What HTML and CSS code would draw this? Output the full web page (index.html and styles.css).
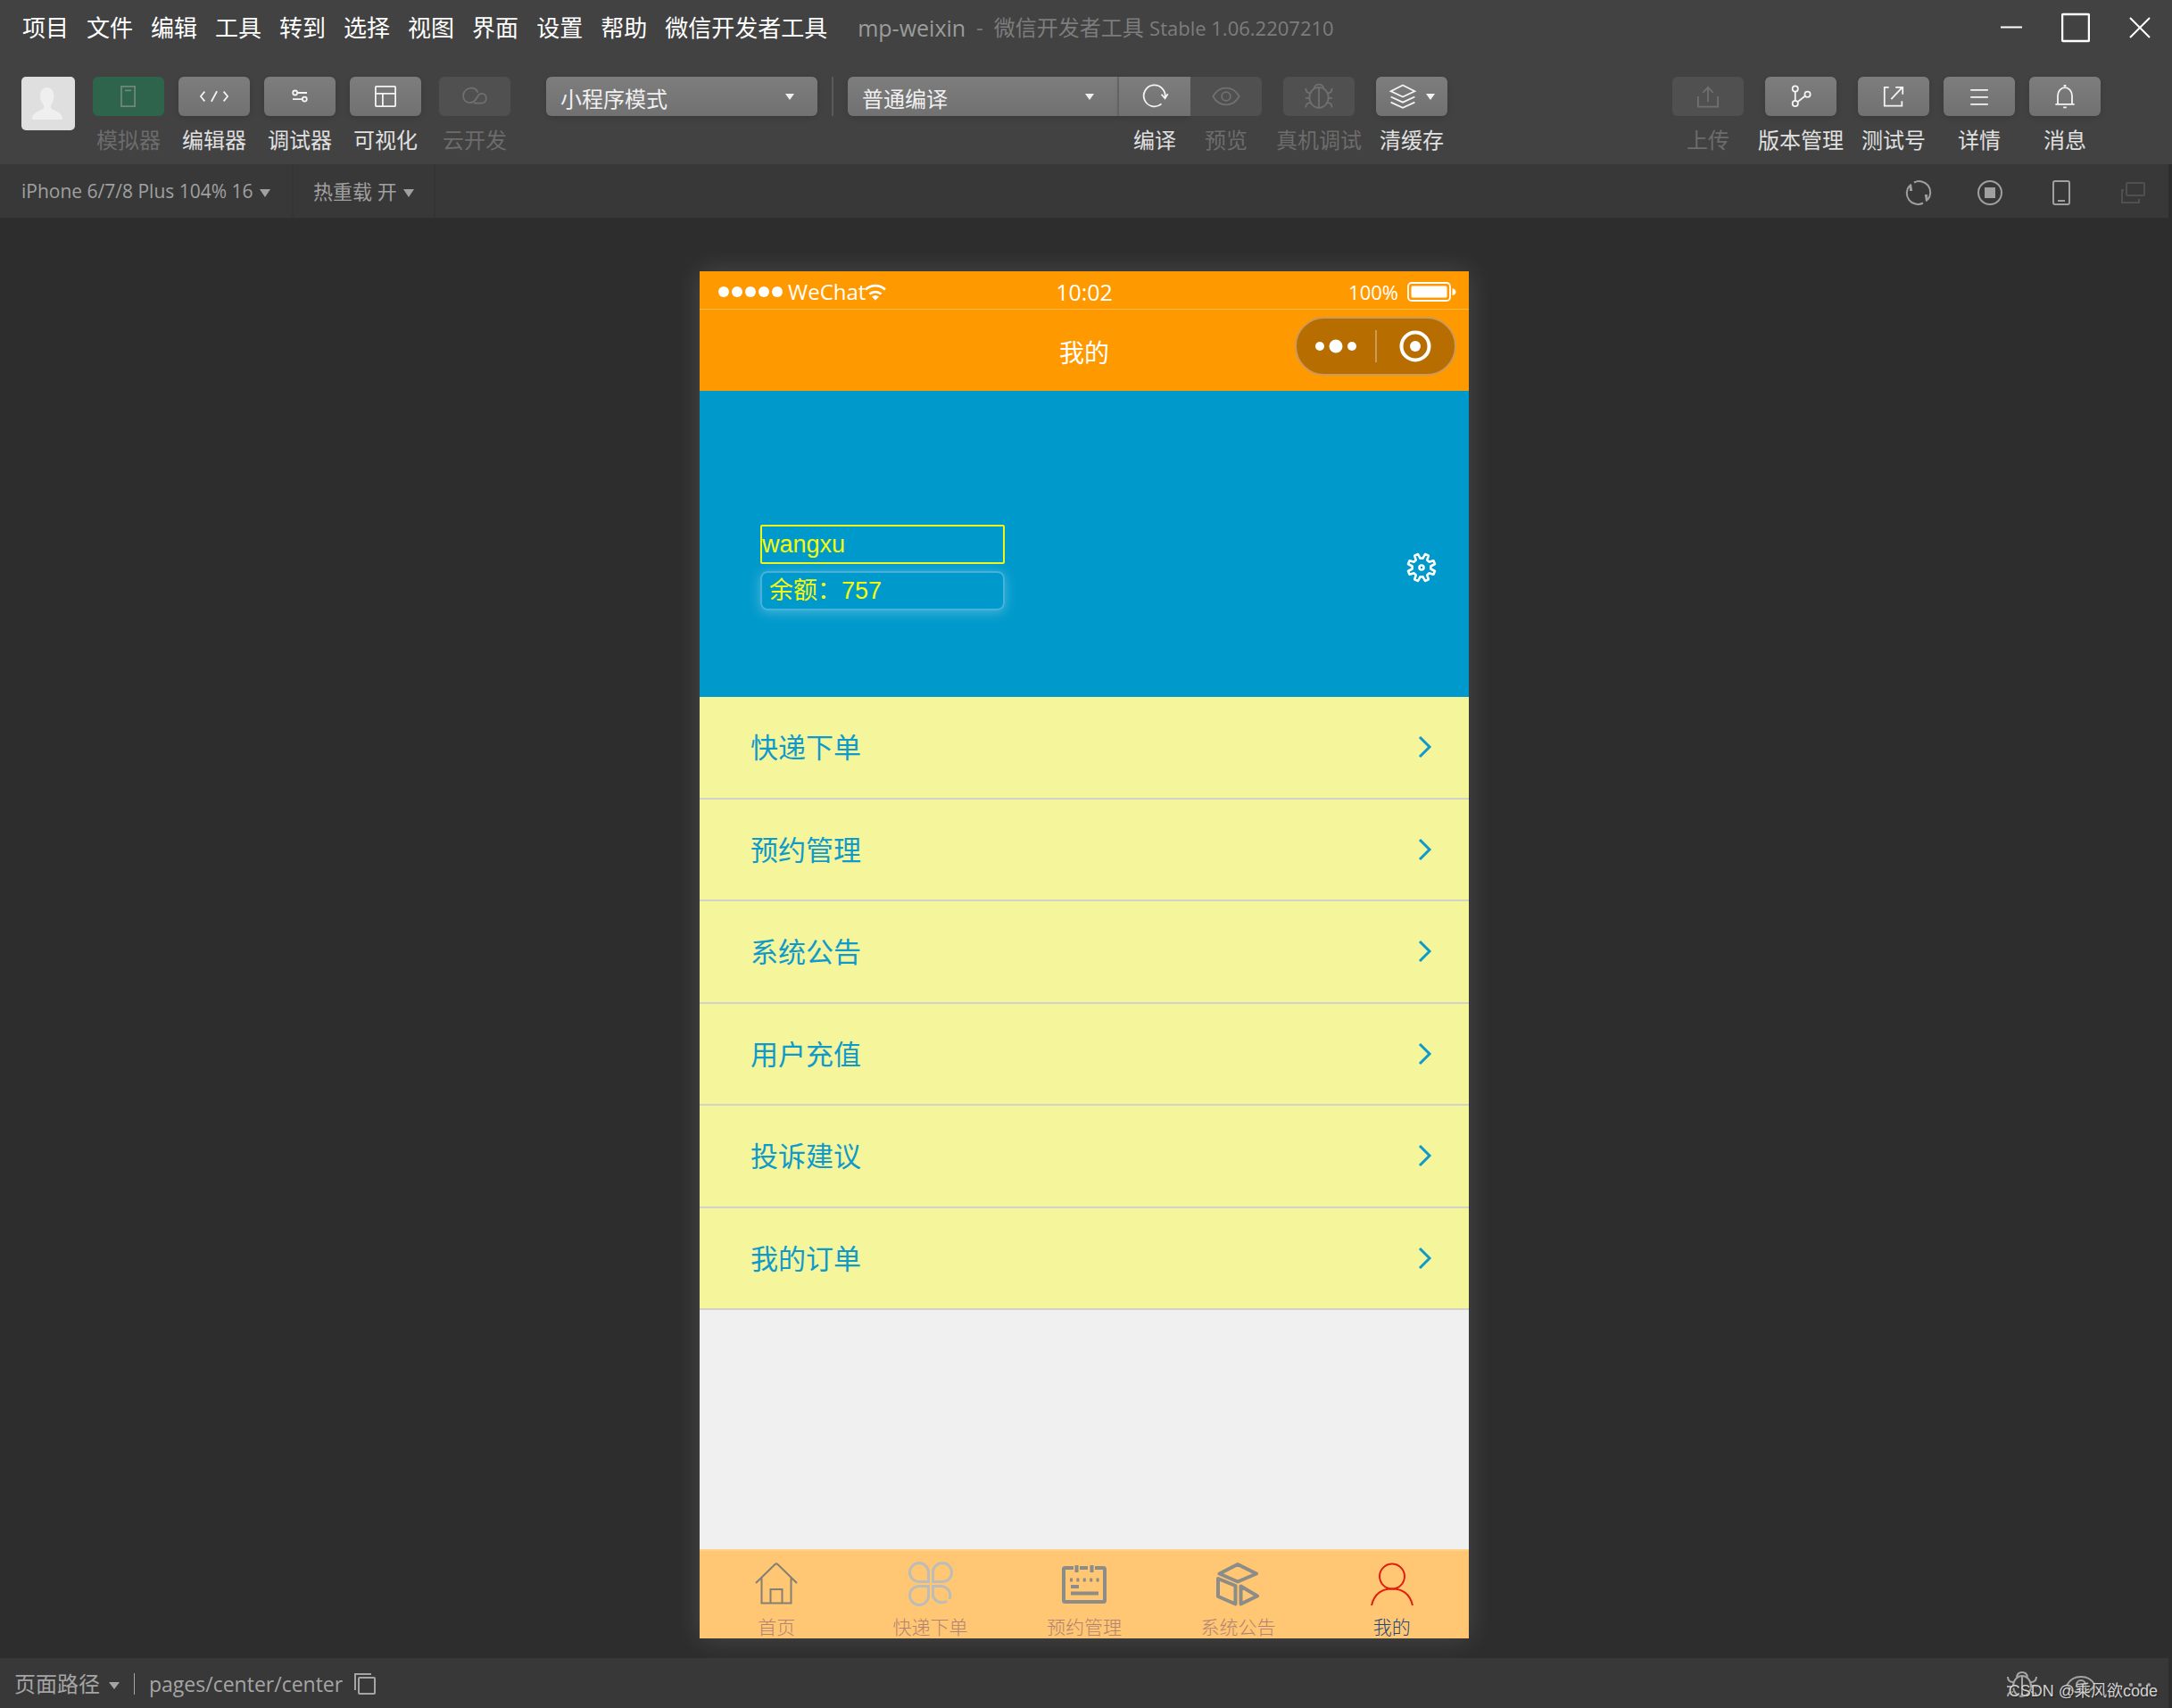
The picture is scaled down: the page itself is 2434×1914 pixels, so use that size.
FILE: index.html
```html
<!DOCTYPE html>
<html lang="zh-CN">
<head>
<meta charset="utf-8">
<title>mp-weixin - 微信开发者工具</title>
<link rel="stylesheet" href="styles.css">
</head>
<body>
<header class="top">
  <div class="titlebar">
    <nav class="menu">
      <a href="#">项目</a><a href="#">文件</a><a href="#">编辑</a><a href="#">工具</a><a href="#">转到</a><a href="#">选择</a><a href="#">视图</a><a href="#">界面</a><a href="#">设置</a><a href="#">帮助</a><a href="#">微信开发者工具</a>
    </nav>
    <div class="doc-title"><span class="doc-name">mp-weixin</span><span>-</span><span>微信开发者工具 <span class="version">Stable 1.06.2207210</span></span></div>
    <div class="window-buttons">
      <button type="button" aria-label="最小化"><svg width="32" height="36" viewBox="0 0 32 36"><path d="M4 17.500h24" stroke-width="2"/></svg></button>
      <button type="button" aria-label="最大化"><svg width="32" height="36" viewBox="0 0 32 36"><rect x="1" y="3" width="30" height="30" rx="1" stroke-width="2.500"/></svg></button>
      <button type="button" aria-label="关闭"><svg width="32" height="36" viewBox="0 0 32 36"><path d="M5 7l22 22M27 7L5 29" stroke-width="2"/></svg></button>
    </div>
  </div>

  <div class="toolbar">
    <button type="button" class="avatar" aria-label="用户"><svg width="60" height="60" viewBox="0 0 60 60"><path d="M28.500 12c5 0 8 4 8 9.500 0 5-2 8-3.500 10.500v3c2 3 12 4 13 11 .3 1.500-.5 2-2 2H14c-1.500 0-2.300-.5-2-2 1-7 11-8 13-11v-3c-1.500-2.500-4-5.500-4-10.500 0-5.500 3-9.500 7.500-9.500z"/></svg></button>
    <div class="tools">
      <button type="button" class="tool off active"><span class="face"><svg width="36" height="36" viewBox="0 0 36 36"><path d="M9 5.500h17v25H9zM13.500 10.500h8"/></svg></span><span>模拟器</span></button>
      <button type="button" class="tool"><span class="face"><svg width="36" height="36" viewBox="0 0 36 36"><path d="M6 12L1 18l5 6M30 12l5 6-5 6M21.500 11.500l-7 13"/></svg></span><span>编辑器</span></button>
      <button type="button" class="tool"><span class="face"><svg width="36" height="36" viewBox="0 0 36 36"><circle cx="12" cy="13.500" r="2.800"/><circle cx="24" cy="21.500" r="2.800"/><path d="M15 13.500h12M9 21.500h12"/></svg></span><span>调试器</span></button>
      <button type="button" class="tool"><span class="face"><svg width="36" height="36" viewBox="0 0 36 36"><rect x="5.500" y="5.500" width="25" height="25" rx="1"/><path d="M6 14.500h24M14.500 14.500V30"/></svg></span><span>可视化</span></button>
    </div>
    <button type="button" class="tool off cloud"><span class="face"><svg width="36" height="36" viewBox="0 0 36 36"><path d="M22 13.500C21 10 18 7.500 13.500 7.500 8.500 7.500 3.500 11.500 3.500 17s3.500 9 8.500 9c9.500 0 8-11.500 14.500-11.500 3.500 0 6 2.500 6 6s-2.500 6-6 6H17"/></svg></span><span>云开发</span></button>
    <div class="picker mode"><select aria-label="模式"><option>小程序模式</option></select></div>
    <span class="split"></span>
    <div class="compile">
      <div class="picker"><select aria-label="编译模式"><option>普通编译</option></select></div>
      <button type="button" class="tool join"><span class="face"><svg width="36" height="36" viewBox="0 0 36 36"><path d="M26.500 27.500A13.500 13.500 0 1 1 31 19.500M26.500 15.500l4.500 5 3.500-5.500"/></svg></span><span>编译</span></button>
      <button type="button" class="tool off last"><span class="face"><svg width="36" height="36" viewBox="0 0 36 36"><path d="M1.500 18C5 11.500 11 7.500 18 7.500s13 4 16.500 10.500C31 24.500 25 28.500 18 28.500S5 24.500 1.500 18z"/><circle cx="18" cy="18" r="5.500"/></svg></span><span>预览</span></button>
    </div>
    <div class="tools">
      <button type="button" class="tool off"><span class="face"><svg width="36" height="36" viewBox="0 0 36 36"><ellipse cx="18" cy="19.500" rx="12" ry="13"/><path d="M12 8.500C12 1 24 1 24 8.500M18 7v26M1.500 8c0 4.500 2.500 6 5.500 6M34.500 8c0 4.500-2.500 6-5.500 6M1 20h5M30 20h5M1.500 32c0-4.500 2.500-6 6-6M34.500 32c0-4.500-2.500-6-6-6"/></svg></span><span>真机调试</span></button>
      <button type="button" class="tool"><span class="face drop"><svg width="36" height="36" viewBox="0 0 36 36"><path d="M18 4l15 7.500-15 7-15-7zM3 18.500l15 7 15-7M3 25.500l15 7 15-7"/></svg></span><span>清缓存</span></button>
    </div>
    <div class="tools right">
      <button type="button" class="tool off"><span class="face"><svg width="36" height="36" viewBox="0 0 36 36"><path d="M5.500 18v13h25V18M18 25V7M11.500 13.500L18 6.500l6.500 7"/></svg></span><span>上传</span></button>
      <button type="button" class="tool"><span class="face"><svg width="36" height="36" viewBox="0 0 36 36"><circle cx="11" cy="8.500" r="3.500"/><circle cx="11" cy="27" r="3.500"/><circle cx="26.500" cy="15.500" r="3.500"/><path d="M11 12v11.500M14 25l9.500-7.500"/></svg></span><span>版本管理</span></button>
      <button type="button" class="tool"><span class="face"><svg width="36" height="36" viewBox="0 0 36 36"><path d="M12 6.500H6.500v23.500H28.500V24M15 21.500L29 6.500M20.500 6.500H29.500v9"/></svg></span><span>测试号</span></button>
      <button type="button" class="tool"><span class="face"><svg width="36" height="36" viewBox="0 0 36 36"><path d="M7 10h22M7 19h22M7 28h22"/></svg></span><span>详情</span></button>
      <button type="button" class="tool"><span class="face"><svg width="36" height="36" viewBox="0 0 36 36"><path d="M6 28h24M9 28V17c0-5.500 4-10 9-10s9 4.500 9 10v11M16.500 4.500h3M16 32h4"/></svg></span><span>消息</span></button>
    </div>
  </div>
</header>

<div class="workspace">
  <div class="simbar">
    <div class="simpick device"><select aria-label="设备"><option>iPhone 6/7/8 Plus 104% 16</option></select></div>
    <div class="simpick"><select aria-label="热重载"><option>热重载 开</option></select></div>
    <div class="simtools">
      <button type="button" aria-label="刷新"><svg width="32" height="32" viewBox="0 0 32 32"><path d="M11 4.500A12.500 12.500 0 0 1 26 24M21 27.500A12.500 12.500 0 0 1 6 8"/><path d="M7 6.500v6.500h1zM25 25.500v-6.500h-1z"/></svg></button>
      <button type="button" aria-label="停止"><svg width="32" height="32" viewBox="0 0 32 32"><circle cx="16" cy="16" r="13"/><rect x="11" y="11" width="10" height="10" fill="currentColor"/></svg></button>
      <button type="button" aria-label="设备方向"><svg width="32" height="32" viewBox="0 0 32 32"><rect x="7" y="3" width="18" height="26" rx="2"/><path d="M12 25h8"/></svg></button>
      <button type="button" class="dim" aria-label="独立窗口"><svg width="32" height="32" viewBox="0 0 32 32"><rect x="9" y="5" width="20" height="14" rx="1"/><path d="M6 13H4v14h19v-4"/></svg></button>
    </div>
  </div>

  <main class="stage">
    <section class="phone">
      <div class="status">
        <div class="carrier"><i></i><i></i><i></i><i></i><i></i><span>WeChat</span><svg width="24" height="19" viewBox="0 0 24 19"><path d="M1 6.500a16 16 0 0 1 22 0M5.500 11.500a10 10 0 0 1 13 0" stroke-width="2.800"/><path d="M8 14.500q4-3 8 0l-4 4z" fill="currentColor" stroke="none"/></svg></div>
        <time>10:02</time>
        <div class="power"><span>100%</span><svg width="55" height="22" viewBox="0 0 55 22"><rect x="1" y="1" width="47" height="20" rx="4" stroke-width="1.800"/><rect x="4.500" y="4.500" width="40" height="13" rx="1.500" fill="currentColor" stroke="none"/><path d="M50.500 7q4 1 4 4t-4 4z" fill="currentColor" stroke="none"/></svg></div>
      </div>
      <div class="navbar">
        <h1>我的</h1>
        <div class="capsule">
          <button type="button" aria-label="更多"><svg width="48" height="36" viewBox="0 0 48 36"><g fill="currentColor" stroke="none"><circle cx="6" cy="18" r="5"/><circle cx="24" cy="18" r="7.500"/><circle cx="42" cy="18" r="5"/></g></svg></button>
          <button type="button" aria-label="关闭"><svg width="36" height="36" viewBox="0 0 36 36"><circle cx="18" cy="18" r="15.500" stroke-width="4"/><circle cx="18" cy="18" r="6" fill="currentColor" stroke="none"/></svg></button>
        </div>
      </div>

      <div class="profile">
        <div class="account">
          <div class="user-name">wangxu</div>
          <div class="balance">余额：757</div>
        </div>
        <button type="button" class="gear" aria-label="设置"><svg width="36" height="36" viewBox="0 0 36 36"><path d="M16.500 7.600h3L22 3l3.800 1.600-1.500 5 2.100 2.100 5-1.500L33 14l-4.600 2.500v3L33 22l-1.600 3.800-5-1.500-2.100 2.100 1.500 5L22 33l-2.500-4.600h-3L14 33l-3.800-1.600 1.500-5-2.100-2.100-5 1.500L3 22l4.600-2.500v-3L3 14l1.600-3.800 5 1.500 2.100-2.100-1.500-5L14 3z" stroke-width="2.600" stroke-linejoin="round"/><circle cx="18" cy="18" r="2.500" stroke-width="2.600"/></svg></button>
      </div>

      <nav class="list">
        <a href="#">快递下单<svg width="16" height="28" viewBox="0 0 16 28"><path d="M2 3l11 11L2 25"/></svg></a>
        <a href="#">预约管理<svg width="16" height="28" viewBox="0 0 16 28"><path d="M2 3l11 11L2 25"/></svg></a>
        <a href="#">系统公告<svg width="16" height="28" viewBox="0 0 16 28"><path d="M2 3l11 11L2 25"/></svg></a>
        <a href="#">用户充值<svg width="16" height="28" viewBox="0 0 16 28"><path d="M2 3l11 11L2 25"/></svg></a>
        <a href="#">投诉建议<svg width="16" height="28" viewBox="0 0 16 28"><path d="M2 3l11 11L2 25"/></svg></a>
        <a href="#">我的订单<svg width="16" height="28" viewBox="0 0 16 28"><path d="M2 3l11 11L2 25"/></svg></a>
      </nav>

      <nav class="tabs">
        <a href="#"><svg class="icon-home" width="50" height="50" viewBox="0 0 50 50"><path d="M2 24L23.500 3q1.500-1.200 3 0L48 24M8.500 18.500V46.500h33V18.500M18.500 46V31h13v15"/></svg><span>首页</span></a>
        <a href="#"><svg class="icon-clover" width="50" height="50" viewBox="0 0 50 50"><path d="M22.500 22.500H13A10.500 10.500 0 1 1 22.500 12zM27.500 22.500V12A10.500 10.500 0 1 1 37 22.500zM22.500 27.500V38A10.500 10.500 0 1 1 13 27.500zM43.500 44A10.500 10.500 0 0 1 27.500 38V27.500H37A10.500 10.500 0 0 1 46 42"/></svg><span>快递下单</span></a>
        <a href="#"><svg class="icon-solid" width="50" height="50" viewBox="0 0 50 50"><path d="M13 7H3.500q-1.500 0-1.500 1.500v35q0 1.500 1.500 1.500h43q1.500 0 1.500-1.500v-35q0-1.500-1.500-1.500H37M20 7h9M16.500 4v8M33.500 4v8M10 28h9M10 35.500h31"/><path d="M9 20.500h33" stroke-dasharray="3 4.400"/></svg><span>预约管理</span></a>
        <a href="#"><svg class="icon-solid" width="50" height="50" viewBox="0 0 50 50"><path d="M25 3l21 10.500L25 22.500 4.500 13.500zM3 19l19.500 8v20.500L3 39zM28.500 27.500v20l18.500-9z"/></svg><span>系统公告</span></a>
        <a href="#" class="current"><svg class="icon-person" width="50" height="50" viewBox="0 0 50 50"><circle cx="25" cy="16.500" r="14"/><path d="M2 49C5 36 14 30.500 25 30.500S45 36 48 49"/></svg><span>我的</span></a>
      </nav>
    </section>
  </main>

  <footer class="footer">
    <div class="pathpick"><select aria-label="页面路径"><option>页面路径</option></select></div>
    <span class="bar"></span>
    <span class="path">pages/center/center</span>
    <button type="button" aria-label="复制路径"><svg width="26" height="26" viewBox="0 0 26 26"><rect x="6" y="6" width="18" height="18" rx="1"/><path d="M2 20V2h18"/></svg></button>
    <div class="footer-tools">
      <button type="button" aria-label="调试"><svg width="36" height="32" viewBox="0 0 36 32"><ellipse cx="18" cy="17.500" rx="10" ry="11.500"/><path d="M12 7.500C13 0 23 0 24 7.500M18 7v22M2 7c0 5 3 6 6 6M34 7c0 5-3 6-6 6M1 18h7M28 18h7M2 29c0-4 3-5 6-5M34 29c0-4-3-5-6-5"/></svg></button>
      <button type="button" aria-label="预览"><svg width="36" height="32" viewBox="0 0 36 32"><path d="M2.500 16C6 9.500 11.500 7 18 7s12 2.500 15.500 9C30 22.500 24.500 25 18 25S6 22.500 2.500 16z"/><circle cx="18" cy="16" r="5"/></svg></button>
      <button type="button" aria-label="更多"><svg width="36" height="32" viewBox="0 0 36 32"><g fill="currentColor" stroke="none"><circle cx="8" cy="16" r="2"/><circle cx="18" cy="16" r="2"/><circle cx="28" cy="16" r="2"/></g></svg></button>
    </div>
  </footer>
</div>
<div class="watermark">CSDN @乘风欲code</div>
</body>
</html>
```
FILE: styles.css
```css
* { box-sizing: border-box; }

body {
  margin: 0;
  min-height: 100vh;
  display: flex;
  flex-direction: column;
  position: relative;
  background: #2d2d2d;
  color: #e0e0e0;
  font-family: "Open Sans", "Noto Sans CJK SC", sans-serif;
  font-size: 24px;
  line-height: 32px;
}

a { color: inherit; text-decoration: none; }

button, select {
  margin: 0;
  padding: 0;
  border: 0;
  background: none;
  color: inherit;
  font: inherit;
  appearance: none;
}

button { display: flex; }
svg { display: block; fill: none; stroke: currentColor; stroke-width: 2; flex: none; }

/* title bar */
.top { background: #424242; }

.titlebar {
  display: flex;
  align-items: center;
  height: 62px;
  padding: 0 20px 0 25px;
}

.menu { display: flex; gap: 20px; color: #fff; font-size: 26px; white-space: nowrap; }

.doc-title {
  display: flex;
  gap: 12px;
  margin-left: 34px;
  color: #7d7d7d;
  white-space: nowrap;
}
.doc-name { color: #9c9c9c; font-size: 25px; }
.version { font-size: 22px; }

.window-buttons { display: flex; gap: 40px; margin-left: auto; color: #fff; }

/* toolbar */
.toolbar {
  display: flex;
  align-items: flex-start;
  height: 122px;
  padding: 24px 80px 0 24px;
  white-space: nowrap;
}

.avatar { width: 60px; height: 60px; margin-right: 20px; border-radius: 5px; background: #dfdfdf; }
.avatar svg { fill: #efefef; stroke: none; }

.tools { display: flex; gap: 16px; }
.tools + .tool { margin-left: 20px; }
.right { margin-left: auto; }

.tool { flex-direction: column; align-items: center; gap: 12px; line-height: 30px; }

.face {
  display: flex;
  align-items: center;
  justify-content: center;
  width: 80px;
  height: 44px;
  border-radius: 6px;
  background: linear-gradient(#7d7d7d, #717171);
  box-shadow: 0 2px 6px rgba(0, 0, 0, .12);
  color: #f4f4f4;
}
.face svg { width: 32px; height: 32px; }
.off { color: #6c6c6c; }
.off .face { background: #505050; color: #707070; box-shadow: none; }
.active .face { background: #2d644b; color: #70877c; }

.picker::after, .simpick::after, .pathpick::after, .drop::after {
  content: "";
  border: 5px solid transparent;
  border-top: 7px solid currentColor;
  border-bottom: 0;
  pointer-events: none;
}
.drop { gap: 10px; }

.picker {
  display: flex;
  align-items: center;
  width: 304px;
  height: 44px;
  padding-right: 26px;
  border-radius: 6px;
  background: linear-gradient(#7d7d7d, #717171);
  box-shadow: 0 2px 6px rgba(0, 0, 0, .12);
  color: #f0f0f0;
}
.picker select { flex: 1; height: 44px; padding: 6px 0 0 16px; }
.mode { margin-left: 40px; }
.split { width: 2px; height: 44px; margin: 0 16px; background: #5a5a5a; }
.compile { display: flex; margin-right: 16px; }
.compile .picker { border-right: 2px solid #686868; border-radius: 6px 0 0 6px; }
.join .face { border-radius: 0; }
.last .face { border-radius: 0 6px 6px 0; }

/* simulator bar */
.workspace { flex: 1; display: flex; flex-direction: column; margin-right: 4px; }

.simbar {
  display: flex;
  align-items: center;
  height: 61px;
  padding-right: 24px;
  border-bottom: 1px solid #303030;
  background: #383838;
  color: #a0a0a0;
  font-size: 22px;
}
.simpick { display: flex; align-items: center; gap: 7px; height: 60px; padding: 0 22px; border-right: 2px solid #343434; }
.device { padding: 0 24px; font-size: 21px; }
.simpick select { height: 60px; }
.simpick::after { border-width: 9px 6px 0; margin-top: 4px; }
.simtools { display: flex; gap: 48px; margin-left: auto; padding-top: 4px; }
.dim { color: #505050; }

/* simulated phone */
.stage { flex: 1; display: flex; justify-content: center; padding: 59px 0 22px; }

.phone {
  display: flex;
  flex-direction: column;
  width: 862px;
  max-width: 100%;
  background: #f0f0f0;
  box-shadow: 0 0 28px rgba(255, 255, 255, .14);
  color: #fff;
}

.status {
  display: grid;
  grid-template-columns: 1fr auto 1fr;
  align-items: center;
  height: 43px;
  padding: 4px 14px 0;
  border-bottom: 1px solid #ffb84d;
  background: #ff9900;
}
.status time { font-size: 25px; }
.carrier { display: flex; align-items: center; gap: 3px; padding-left: 7px; }
.carrier i { width: 12px; height: 12px; border-radius: 50%; background: #fff; }
.carrier span { margin-left: 3px; }
.carrier svg { margin-left: -4px; }
.power { display: flex; align-items: center; justify-content: flex-end; gap: 10px; font-size: 22px; }

.navbar {
  display: grid;
  grid-template-columns: 1fr auto 1fr;
  height: 91px;
  padding: 8px 14px 0;
  background: #ff9900;
}
.navbar h1 { grid-column: 2; margin: 24px 0 0; font-size: 28px; font-weight: 400; }
.capsule {
  display: flex;
  align-items: center;
  justify-self: end;
  width: 181px;
  height: 66px;
  border: 2px solid #cd9a57;
  border-radius: 33px;
  background: #b76d00;
}
.capsule button { flex: 1; justify-content: center; }
.capsule button + button { border-left: 2px solid #cd9a57; }

.profile {
  display: flex;
  align-items: flex-start;
  justify-content: space-between;
  height: 343px;
  padding: 150px 35px 0 68px;
  background: #0099cc;
}
.account { display: grid; gap: 8px; width: 274px; color: #f5f90b; font: 27px/40px "Liberation Sans", "Noto Sans CJK SC", sans-serif; }
.user-name { border: 2px solid #f0f51a; border-radius: 2px; }
.balance {
  padding-left: 8px;
  border: 2px solid #45b2db;
  border-radius: 8px;
  box-shadow: 0 2px 14px rgba(255, 255, 255, .3);
}
.gear { margin-top: 30px; }

.list { display: flex; flex-direction: column; height: 687px; color: #0e9acb; font-size: 31px; }
.list a {
  flex: 1;
  display: flex;
  align-items: center;
  justify-content: space-between;
  padding: 0 41px 0 57px;
  border-bottom: 2px solid #d2d2c8;
  background: #f5f59c;
}
.list svg { stroke-width: 3; }

.tabs {
  display: flex;
  height: 100px;
  margin-top: auto;
  border-top: 2px solid #ffd28c;
  background: #ffc673;
  color: #b28373;
  font-size: 21px;
  font-weight: 300;
  line-height: 26px;
}
.tabs a { flex: 1; display: flex; flex-direction: column; align-items: center; gap: 10px; padding-top: 12px; }
.tabs .current { color: #24487c; }
.icon-home { stroke: #837f75; }
.icon-clover { stroke: #bcbcb8; stroke-width: 3; }
.icon-solid { stroke: #8c8c88; stroke-width: 4; stroke-linejoin: round; }
.icon-person { stroke: #e01f0d; stroke-width: 2; }

/* footer */
.footer {
  display: flex;
  align-items: center;
  height: 56px;
  padding: 2px 14px 0 16px;
  background: #383838;
  color: #a5a5a5;
}
.pathpick { display: flex; align-items: center; gap: 10px; }
.pathpick::after { border-width: 8px 6px 0; margin-top: 4px; }
.bar { width: 1px; height: 24px; margin: 0 16px; background: #a5a5a5; }
.path { margin-right: 12px; font-size: 23px; }
.footer-tools { display: flex; gap: 30px; margin-left: auto; padding-top: 2px; }

.watermark {
  position: absolute;
  right: 16px;
  bottom: 3px;
  color: #d2d2d2;
  font: 18px/32px "Liberation Sans", "Noto Sans CJK SC", sans-serif;
  text-shadow: 1px 1px 1px #222;
}
```
